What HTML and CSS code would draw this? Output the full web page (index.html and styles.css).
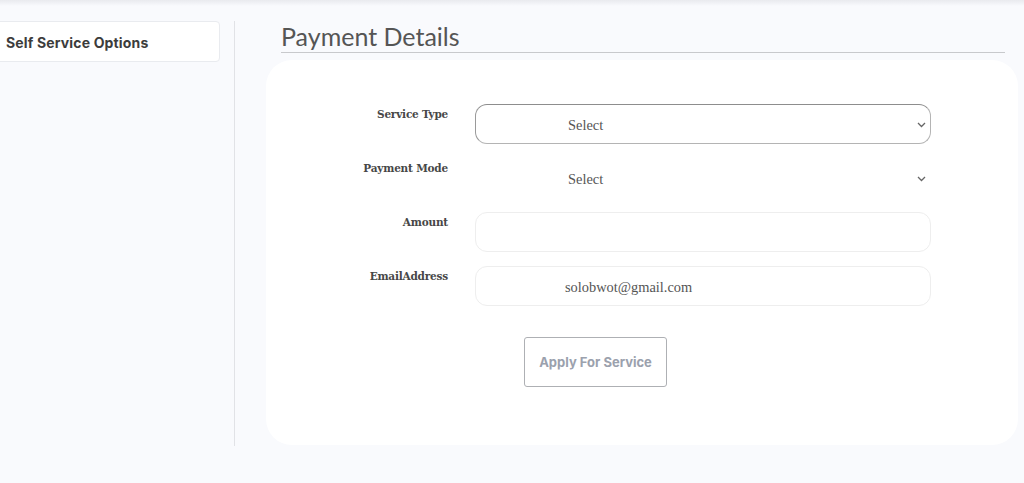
FILE: index.html
```html
<!DOCTYPE html>
<html>
<head>
<meta charset="utf-8">
<link rel="stylesheet" href="styles.css">
</head>
<body>
<div class="topbar"></div>
<div class="layout">
  <aside class="sidebar">
    <div class="side-card">Self Service Options</div>
  </aside>
  <main class="main">
    <h1 class="title">Payment Details</h1>
    <section class="card">
      <form class="form">
        <div class="row">
          <label class="label">Service Type</label>
          <div class="field select active">
            <span class="value">Select</span>
            <svg class="chev" width="9" height="6" viewBox="0 0 9 6"><path d="M1 1l3.5 3.5L8 1" fill="none" stroke="#666" stroke-width="1.3"/></svg>
          </div>
        </div>
        <div class="row">
          <label class="label">Payment Mode</label>
          <div class="field select plain">
            <span class="value">Select</span>
            <svg class="chev" width="9" height="6" viewBox="0 0 9 6"><path d="M1 1l3.5 3.5L8 1" fill="none" stroke="#666" stroke-width="1.3"/></svg>
          </div>
        </div>
        <div class="row">
          <label class="label">Amount</label>
          <div class="field"></div>
        </div>
        <div class="row">
          <label class="label">EmailAddress</label>
          <div class="field"><span class="value email">solobwot@gmail.com</span></div>
        </div>
        <div class="actions">
          <button type="button" class="btn">Apply For Service</button>
        </div>
      </form>
    </section>
  </main>
</div>
</body>
</html>
```
FILE: styles.css
```css
* { box-sizing: border-box; }
html, body { margin: 0; padding: 0; }
body {
  background: #f9fafd;
  width: 1024px;
  height: 483px;
  overflow: hidden;
  font-family: "Liberation Serif", serif;
}
.topbar {
  height: 6px;
  background: linear-gradient(#e9eaee, #f9fafd);
}
.layout {
  display: flex;
  padding-top: 15px;
}
.sidebar {
  width: 239px;
  height: 425px;
  border-right: 1px solid #e1e2e6;
  padding-right: 14px;
  margin-left: -4px;
}
.side-card {
  background: #fff;
  border: 1px solid #e9ebef;
  border-radius: 4px;
  height: 41px;
  padding: 12px 0 0 9px;
  font-family: "Inter", sans-serif;
  font-weight: 700;
  font-size: 14px;
  color: #3c3c3c;
  letter-spacing: 0.15px;
}
.main {
  flex: 1;
  padding-left: 31px;
}
.title {
  margin: 0 19px 0 15px;
  font-family: "Lato", sans-serif;
  font-weight: 400;
  font-size: 25px;
  color: #555;
  line-height: 30px;
  border-bottom: 1px solid #c8c9cc;
  padding-bottom: 1px;
  height: 32px;
}
.card {
  background: #fff;
  margin: 7px 6px 0 0;
  border-radius: 26px;
  height: 385px;
  padding-top: 44px;
}
.form {
  display: flex;
  flex-direction: column;
  gap: 14px;
}
.row {
  display: grid;
  grid-template-columns: 182px 456px;
  column-gap: 27px;
  height: 40px;
}
.label {
  text-align: right;
  font-family: "DejaVu Serif", serif;
  font-weight: 700;
  font-size: 10.5px;
  color: #474747;
  padding-top: 4px;
  letter-spacing: -0.2px;
}
.field {
  position: relative;
  border: 1px solid #eeeeee;
  border-radius: 12px;
  display: flex;
  align-items: center;
  padding-left: 92px;
  padding-top: 1px;
}
.field.active {
  border-color: #b4b4b4;
  border-top-color: #8d8d8d;
  border-left-color: #9a9a9a;
}
.field.plain { border-color: transparent; }
.value {
  font-family: "Liberation Serif", serif;
  font-size: 14.4px;
  color: #555;
  padding-top: 1px;
}
.email { margin-left: -3px; }
.chev {
  position: absolute;
  right: 4px;
  top: 17px;
}
.actions {
  display: flex;
  padding-left: 258px;
  padding-top: 17px;
}
.btn {
  width: 143px;
  height: 50px;
  background: #fff;
  border: 1px solid #aeb0b4;
  border-radius: 3px;
  font-family: "Inter", sans-serif;
  font-weight: 700;
  font-size: 13px;
  color: #9ba1ad;
  padding: 0;
}
```
